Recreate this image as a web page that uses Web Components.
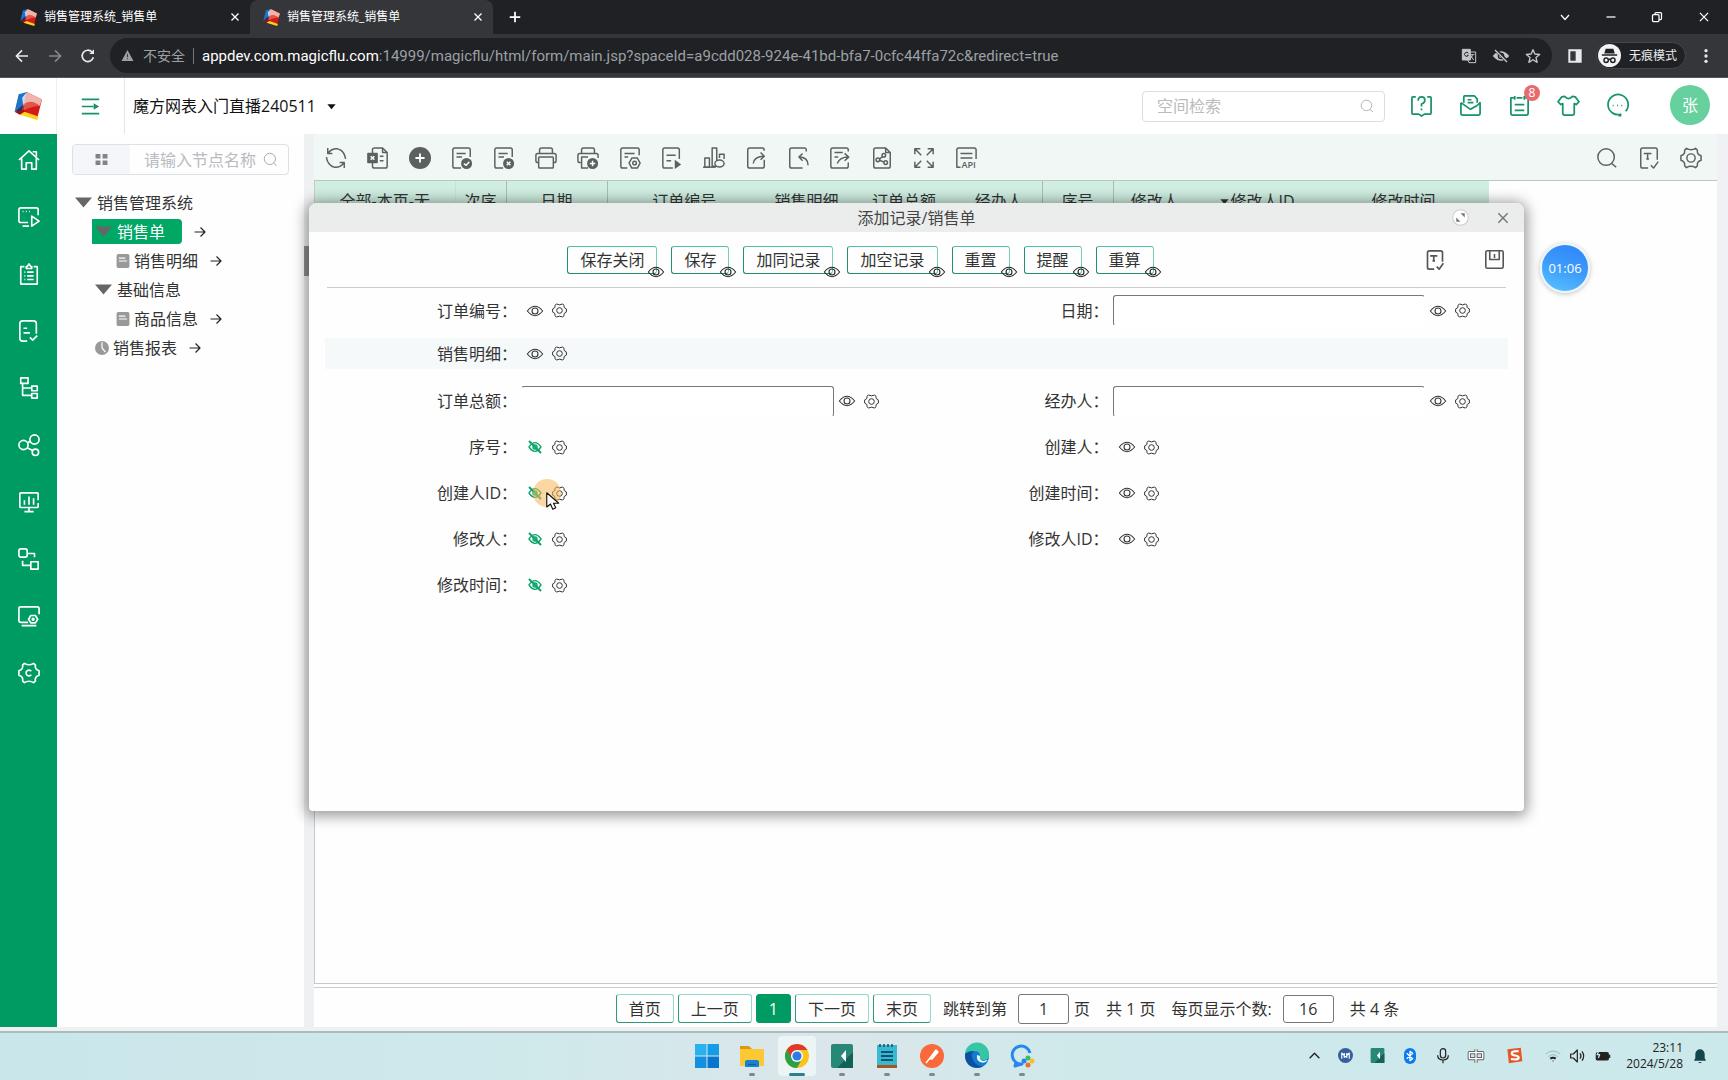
<!DOCTYPE html>
<html lang="zh-CN">
<head>
<meta charset="utf-8">
<title>销售管理系统_销售单</title>
<style>
  html, body { margin: 0; height: 100%; }
  body { font: 16px/24px "Open Sans", "Noto Sans CJK SC", sans-serif; color: #333; overflow: hidden; background: #fdfefd; }
</style>
</head>
<body>
<magic-desktop></magic-desktop>

<script>
const ICONS = {
  logo: `<g stroke="none"><path d="M11 0 24 6.500 20 22 13 20 7 15 8 6Z" fill="#d51b16"/><path d="M11 0 24 6.500 22 12Q14 6 8 12L8 5Z" fill="#f0b4ac"/><path d="M9 10Q15 6 22 12 15 12 8 16Z" fill="#e2574d"/><path d="M4 2 11 0 8 10 0.500 17Z" fill="#1f73c9"/><path d="M7 5 11 0 8 12Z" fill="#cfdff0"/><path d="M0.500 17 8 10 7 16Z" fill="#12387c"/><path d="M0.500 17 8 15 14 20 5 19.500Z" fill="#a3100f"/><path d="M5 19.500 9 17 21 21 20 24Z" fill="#fbd31c"/></g>`,
  close: `<path d="M5 5 19 19M19 5 5 19"/>`,
  plus: `<path d="M12 3V21M3 12H21"/>`,
  chevdown: `<path d="M4 8 12 17 20 8"/>`,
  chevup: `<path d="M3 17 12 8 21 17"/>`,
  min: `<path d="M3 12H21"/>`,
  restore: `<rect x="3" y="7" width="13" height="14" rx="2"/><path d="M8 7V5Q8 3 10 3H19Q21 3 21 5V15Q21 17 19 17H16"/>`,
  back: `<path d="M21 12H4M12 3.500 3.500 12 12 20.500"/>`,
  forward: `<path d="M3 12H20M12 3.500 20.500 12 12 20.500"/>`,
  reload: `<path d="M20 14A8.500 8.500 0 1 1 18 6L20 8"/><path d="M21 2V9H14Z" fill="currentColor" stroke="none"/>`,
  warn: `<path d="M12 2 23 22H1Z" fill="currentColor" stroke="none"/><path d="M12 9V15M12 17V19" stroke="#202124"/>`,
  translate: `<rect x="2" y="2" width="12" height="16" fill="currentColor"/><path d="M14 6H22V22H12L10 18"/><path d="M11 8A3 3 0 1 0 11 11H9" stroke="#202124"/><path d="M14 10H20M17 10Q17 15 13 17M15 12 19 18"/>`,
  eyeoffsolid: `<path d="M1 12Q12 0 23 12Q12 24 1 12Z" fill="currentColor"/><circle cx="12" cy="12" r="4" stroke="#202124" fill="none"/><path d="M3 2 22 21" stroke="#202124" stroke-width="5"/><path d="M3 3 21 21"/>`,
  star: `<path d="M12 2.500 14.800 9 22 9.700 16.500 14.300 18.200 21.500 12 17.600 5.800 21.500 7.500 14.300 2 9.700 9.200 9Z"/>`,
  panel: `<path fill="currentColor" stroke="none" fill-rule="evenodd" d="M2 2H22V22H2ZM5 5V19H13V5Z"/>`,
  incognito: `<circle cx="12" cy="12" r="12" fill="#f1f3f4" stroke="none"/><path d="M8 5H16L17.500 10H6.500Z" fill="#202124" stroke="none"/><path d="M4 11.500H20M10.500 16.500Q12 15.500 13.500 16.500" stroke="#202124"/><circle cx="8.500" cy="17" r="2.300" stroke="#202124"/><circle cx="15.500" cy="17" r="2.300" stroke="#202124"/>`,
  dots: `<g fill="currentColor" stroke="none"><circle cx="12" cy="4" r="2.500"/><circle cx="12" cy="12" r="2.500"/><circle cx="12" cy="20" r="2.500"/></g>`,
  menu: `<path d="M1 3H23M1 12H16M1 21H23"/><path d="M16 8 23 12 16 16Z" fill="currentColor" stroke="none"/>`,
  caret: `<path d="M3 7H21L12 18Z" fill="currentColor" stroke="none"/>`,
  search: `<circle cx="11" cy="11" r="9"/><path d="M17 18 22 22"/>`,
  help: `<path d="M6 3H3Q2 3 2 4V20Q2 21 3 21H9L12 23 15 21H21Q22 21 22 20V4Q22 3 21 3H18"/><path d="M8.500 7Q8.500 3 12 3 15.500 3 15.500 6.500 15.500 9 12 10.500V13M12 15V17"/>`,
  mail: `<path d="M5 9V3Q5 2 6 2H16L19 5V9M2 9V20Q2 22 4 22H20Q22 22 22 20V9L19 12M2 9 12 16 19 12M9 6H13M9 9H15"/>`,
  tasks: `<path d="M6 4H3V20Q3 22 5 22H19Q21 22 21 20V4H18M9 4H15M7 2V6M17 2V6M7 11H17M7 17H17"/>`,
  shirt: `<path d="M8 2.500Q12 7 16 2.500L19 3 23 8 20 11 18 10V20Q18 22 16 22H8Q6 22 6 20V10L4 11 1 8 5 3Z"/>`,
  chat: `<path d="M16 21A10.500 10.500 0 1 1 20.500 18"/><path d="M7 12H8M11.500 12H12.500M16 12H17M13 22.500H16"/>`,
  home: `<path d="M1 12 12 2 23 12M4 10V22H9V15H15V22H20V10M16 3H20V8"/>`,
  screenplay: `<path d="M11 18H3Q1 18 1 16V4Q1 2 3 2H20Q22 2 22 4V10M5 22H12M5 6H6M8.500 6H9.500M12 6H13M15 11V22L23 16.500Z"/>`,
  clipboard: `<path d="M7 4H3V23H21V4H17M9 4H10L12 1 14 4H15V6H9ZM7 10H8M10 10H17M7 14H8M10 14H17M7 18H8M10 18H17"/>`,
  doccheck: `<path d="M10 23H5Q2 23 2 20V4Q2 1 5 1H17Q20 1 20 4V15M6 9H10M6 14H13M13 19 16 22 21 17"/>`,
  orgtree: `<rect x="3" y="1" width="8" height="6"/><path d="M5 7V20H15M5 12H15"/><rect x="15" y="10" width="6" height="5"/><rect x="15" y="18" width="6" height="5"/>`,
  share: `<circle cx="6" cy="12" r="5"/><circle cx="18" cy="6" r="5"/><circle cx="19" cy="20" r="3.500"/><path d="M10.500 9.500 13.500 8M10 15 16 18"/>`,
  monitor: `<path d="M22 10V3Q22 2 21 2H3Q2 2 2 3V17Q2 18 3 18H21Q22 18 22 17V13M7 10V15M12 6V15M17 8V15M12 18V22M7 22.500H17"/>`,
  flow: `<rect x="1" y="1" width="9" height="9" rx="2"/><rect x="14" y="15" width="8" height="8"/><path d="M10 6H18V10M5 14V19H14"/>`,
  screengear: `<path d="M11 19H3Q1 19 1 17V3Q1 2 3 2H21Q23 2 23 4V10M4 22.500H20"/><path d="M14 11.500H19L21.500 15.500 19 19.500H14L11.500 15.500Z"/><circle cx="16.500" cy="15.500" r="1"/>`,
  gearc: `<path d="M7 1.500Q12 4.500 17 1.500L19 3.500Q18 8 23 9.500V14.500Q18 16 19 20.500L17 22.500Q12 19.500 7 22.500L5 20.500Q6 16 1 14.500V9.500Q6 8 5 3.500Z"/><path d="M14.500 10A3.200 3.200 0 1 0 14.500 14"/>`,
  gear: `<path d="M7 1.500Q12 4.500 17 1.500L19 3.500Q18 8 23 9.500V14.500Q18 16 19 20.500L17 22.500Q12 19.500 7 22.500L5 20.500Q6 16 1 14.500V9.500Q6 8 5 3.500Z"/><circle cx="12" cy="12" r="4.500"/>`,
  eye: `<path d="M0.500 12Q12 -2 23.500 12Q12 26 0.500 12Z"/><circle cx="12" cy="12" r="4.500"/>`,
  eyeoff: `<path d="M3 12Q12 -1 21 12Q12 25 3 12Z"/><circle cx="12" cy="12" r="3"/><path d="M3 3 21 21" stroke-width="3"/>`,
  grid: `<path fill="currentColor" stroke="none" d="M1 2H10V10H1ZM14 2H23V10H14ZM1 14H10V22H1ZM14 14H23V22H14Z"/>`,
  tri: `<path d="M0 5H24L12 19Z" fill="currentColor" stroke="none"/>`,
  doc: `<rect x="1" y="0" width="22" height="24" rx="3" fill="currentColor" stroke="none"/><path d="M5 7H16M5 12H19" stroke="#fff"/>`,
  pie: `<circle cx="12" cy="12" r="12" fill="currentColor" stroke="none"/><path d="M12 2V12L18 19" stroke="#fff"/>`,
  arrow: `<path d="M1 12H22M13 3 22 12 13 21"/>`,
  refresh: `<path d="M4 6Q8 1 14 2 21 4 22.500 13M20 18Q16 23 10 22 3 20 1.500 11M3 1V7H8M21 23V17H16"/>`,
  excel: `<path d="M6 7V3Q6 1 8 1H17L22 6V21Q22 23 20 23H8Q6 23 6 21V17M17 1V6H22M14 10H18M14 15H18"/><rect x="1" y="7" width="10" height="10" fill="currentColor"/><path d="M4 10 8 14M8 10 4 14" stroke="#fff"/>`,
  addfill: `<circle cx="12" cy="12" r="12" fill="currentColor" stroke="none"/><path d="M12 7V17M7 12H17" stroke="#fff" stroke-width="2"/>`,
  docok: `<path d="M11 23H4Q2 23 2 21V3Q2 1 4 1H19Q21 1 21 3V11M6 7H16M6 11H12"/><circle cx="17" cy="18" r="6" fill="currentColor" stroke="none"/><path d="M14 18 16.500 20 20 16" stroke="#fff"/>`,
  docx: `<path d="M11 23H4Q2 23 2 21V3Q2 1 4 1H19Q21 1 21 3V11M6 7H16M6 11H12"/><circle cx="17" cy="18" r="6" fill="currentColor" stroke="none"/><path d="M15 16 19 20M19 16 15 20" stroke="#fff"/>`,
  print: `<path d="M5 7V3Q5 1 7 1H17Q19 1 19 3V7M4 17H3Q1 17 1 15V9Q1 7 3 7H21Q23 7 23 9V15Q23 17 21 17H20"/><rect x="4" y="11" width="16" height="12" rx="1"/>`,
  printadd: `<path d="M5 7V3Q5 1 7 1H17Q19 1 19 3V7M4 17H3Q1 17 1 15V9Q1 7 3 7H21Q23 7 23 9V12M12 11H5V23H12"/><circle cx="17" cy="18" r="6" fill="currentColor" stroke="none"/><path d="M17 15V21M14 18H20" stroke="#fff"/>`,
  docgear: `<path d="M9 23H4Q2 23 2 21V3Q2 1 4 1H20Q22 1 22 3V9M6 7H17M6 11H10"/><path d="M14 12H20L23 17.500 20 23H14L11 17.500Z"/><circle cx="17" cy="17.500" r="2"/>`,
  docrun: `<path d="M13 23H4Q2 23 2 21V3Q2 1 4 1H18Q20 1 20 3V13M6 9H16M6 15H11"/><path d="M15 14 22 19 15 24Z" fill="currentColor" stroke="none"/>`,
  chart: `<path d="M0 22H14"/><rect x="2" y="12" width="5" height="10"/><rect x="10" y="1" width="5" height="20"/><path d="M18 12V8H23V13"/><ellipse cx="18" cy="18" rx="5" ry="3.800" fill="#f0f7f4"/>`,
  docout: `<path d="M21 14V21Q21 23 19 23H5Q3 23 3 21V3Q3 1 5 1H19Q21 1 21 4M9 18Q10 10 21 10M17 6 21 10 17 14"/>`,
  docin: `<path d="M21 5V3Q21 1 19 1H5Q3 1 3 3V21Q3 23 5 23H17M23 20Q23 11 13 11M17 7 13 11 17 15"/>`,
  docsend: `<path d="M21 5V3Q21 1 19 1H4Q2 1 2 3V21Q2 23 4 23H19Q21 23 21 21V17M6 6H15M6 11H10M9 18Q12 11 21 11M17 7 21.500 11 17 15"/>`,
  docshare: `<path d="M16 1H5Q3 1 3 3V21Q3 23 5 23H19Q21 23 21 21V6ZM16 1V6H21"/><circle cx="7.500" cy="14" r="2"/><circle cx="14" cy="9" r="2"/><circle cx="16" cy="17" r="2"/><path d="M9 13 13 10.500M9.500 14.500 14 16.500"/>`,
  expand: `<path d="M2 8V2H8M2 2 9 9M16 2H22V8M22 2 15 9M2 16V22H8M2 22 9 15M22 16V22H16M22 22 15 15"/>`,
  api: `<path d="M6 22H2V3Q2 1 4 1H21Q23 1 23 3V13M6 7H19M6 12H19"/><text x="7" y="23" font-size="10" font-weight="600" fill="currentColor" stroke="none">API</text>`,
  textcheck: `<path d="M11 23H5Q3 23 3 21V3Q3 1 5 1H19Q21 1 21 3V14M7 8V7H14V8M10.500 7V13M9 13H12M14 20 17 23 22 16"/>`,
  save: `<rect x="1" y="1" width="22" height="22" rx="2"/><path d="M6 1V12H18V1M12 5V10"/>`,
  popout: `<circle cx="12" cy="12" r="11" fill="#fff" stroke="#ccc"/><path d="M12 6H18V12ZM12 18H6V12Z" fill="#777" stroke="none"/>`,
  win: `<g fill="#0a84dc" stroke="none"><path d="M0 0H11.500V11.500H0Z" fill="#28b3ee"/><path d="M12.500 0H24V11.500H12.500Z" fill="#169be6"/><path d="M0 12.500H11.500V24H0Z" fill="#1390df"/><path d="M12.500 12.500H24V24H12.500Z" fill="#0876ce"/></g>`,
  folder: `<g stroke="none"><path d="M0 2H9L12 5V12H0Z" fill="#d99a13"/><path d="M0 5H24V22H0Z" fill="#fcc934"/><path d="M5 18Q5 16 7 16H17Q19 16 19 18V23H5Z" fill="#1583d1"/><path d="M8 20H16V21H8Z" fill="#0a5ba3"/></g>`,
  chrome: `<g stroke="none"><circle cx="12" cy="12" r="12" fill="#f9c51d"/><path d="M1.600 6A12 12 0 0 1 22.400 6H12L7 15Z" fill="#dc3a2c"/><path d="M1.600 6A12 12 0 0 0 12 24L17 15 7 14Z" fill="#2ba04a"/><circle cx="12" cy="12" r="6" fill="#fff"/><circle cx="12" cy="12" r="4.600" fill="#2d7be8"/></g>`,
  camtasia: `<g stroke="none"><rect x="1" width="22" height="24" rx="2" fill="#278878"/><path d="M23 8V24H7Z" fill="#126257"/><path d="M16 6V18L11 12Z" fill="#fff"/></g>`,
  notepad: `<g stroke="none"><rect x="2" y="1" width="20" height="20" fill="#38b9cf"/><rect x="2" y="21" width="20" height="3" fill="#a7561d"/></g><path d="M6 8H18M6 12H18M6 16H18" stroke="#0c5577" stroke-width="2"/><path d="M5 0V3M9 0V3M13 0V3M17 0V3" stroke="#145070"/>`,
  postman: `<circle cx="12" cy="12" r="12" fill="#f9693a" stroke="none"/><path d="M6 19 10 14 16 9M10 14 12 15 18 8 16 6Z" fill="#fff" stroke="#fff"/>`,
  edge: `<g stroke="none"><circle cx="12" cy="12" r="12" fill="#1479cf"/><path d="M0 10A12 12 0 0 1 24 11Q24 17 17 16 14 15 15 12 15 7 9 7 3 7 0 10Z" fill="#35c6a6"/><path d="M0 10Q3 7 9 7 5 10 8 16 11 22 18 22.500 9 26 3 20 0 16 0 10Z" fill="#0c519f"/><path d="M15 12Q14 16 18 17L23 16Q20 20 15 18 11 16 12 11Z" fill="#e7f7fb"/></g>`,
  wecom: `<path d="M20 9A9 9 0 1 0 12 20L5 22 6 18" stroke="#2587ef" stroke-width="3"/><g stroke="none"><circle cx="18" cy="14" r="2.500" fill="#3cc05d"/><circle cx="22" cy="17" r="2.500" fill="#f8bf2a"/><circle cx="18" cy="21" r="2.500" fill="#ed6c31"/><circle cx="14" cy="17" r="2.500" fill="#2587ef"/></g>`,
  magnet: `<circle cx="12" cy="12" r="12" fill="#355f9f" stroke="none"/><path d="M6 17V8L12 14 18 8V17M10 8V16M14 8V16" stroke="#fff" stroke-width="1.800"/>`,
  bluetooth: `<rect x="3" width="18" height="24" rx="9" fill="#0a7af0" stroke="none"/><path d="M7 8 16 16 12 19V5L16 8 7 16" stroke="#fff" stroke-width="2"/>`,
  mic: `<rect x="8" y="1" width="8" height="14" rx="4"/><path d="M4 11Q4 18 12 18 20 18 20 11M12 18V23"/>`,
  zhong: `<path d="M2 7H22V16H2ZM12 2V22" stroke="#666" stroke-width="5"/><path d="M2 7H22V16H2ZM12 2V22" stroke="#fff" stroke-width="2"/>`,
  sogou: `<path d="M2 3 21 1 23 20 4 23Z" fill="#e5572a" stroke="none"/><path d="M18 6Q8 5 8 9C8 13 18 11 18 15Q17 19 7 17" stroke="#fff" stroke-width="3"/>`,
  wifi: `<path d="M1 9Q12 0 23 9M5 13Q12 7 19 13" stroke="#9bb"/><path d="M8 16Q12 13 16 16M12 19V20" stroke-width="3"/>`,
  volume: `<path d="M1 9H5L11 3V21L5 15H1ZM15 8Q18 12 15 16M18 5Q23 12 18 19"/>`,
  battery: `<rect x="2" y="7" width="18" height="11" rx="2" fill="currentColor"/><path d="M22 10V15"/><path d="M7 2 3 10H7L5 15" stroke="#cfe9eb"/>`,
  bell: `<path d="M3 19 5 15V9A7 7 0 0 1 19 9V15L21 19ZM9 21H15L12 23Z" fill="currentColor" stroke="none"/>`,
  cursor: `<path d="M1 1V20L6 16 9 23 13 21 10 15H17Z" fill="#fff" stroke="#111"/>`
};

/* Shared base: renders a template string into an open shadow root. */
class View extends HTMLElement {
  connectedCallback() {
    if (this.shadowRoot) return;
    this.attachShadow({ mode: 'open' }).innerHTML = `<style>
      *{box-sizing:border-box} button{font:inherit;color:inherit;background:none;border:0;padding:0;margin:0;display:inline-flex;align-items:center;justify-content:center;vertical-align:middle}
      input{font:inherit;color:inherit;margin:0;min-width:0;outline:0}
      a{color:inherit;text-decoration:none}
      ${this.css()}</style>${this.html()}`;
  }
}

customElements.define('mf-icon', class extends View {
  css() {
    const s = this.getAttribute('size') || 22, w = this.getAttribute('weight') || 1.5;
    return `:host{display:inline-block;flex:none;width:${s}px;height:${s}px}
      svg{display:block;width:100%;height:100%;fill:none;stroke:currentColor;stroke-width:${w};stroke-linejoin:round;overflow:visible}`;
  }
  html() { return `<svg viewBox="0 0 24 24" aria-hidden="true">${ICONS[this.getAttribute('name')]}</svg>`; }
});
const icon = (n, s, w) => `<mf-icon name="${n}" size="${s || 22}" weight="${w || 1.5}"></mf-icon>`;
const iconButton = (n, s, w, label) => `<button type="button" aria-label="${label || n}">${icon(n, s, w)}</button>`;

customElements.define('browser-tab', class extends View {
  css() { return `:host{display:flex;align-items:center;gap:7px;width:243px;height:34px;padding:0 9px 0 13px;color:#fff;font-size:12px}
    :host([active]){background:#35363a;border-radius:8px 8px 0 0} span{flex:1}`; }
  html() { return `${icon('logo', 17)}<span><slot></slot></span>${iconButton('close', 12, 2.5, '关闭')}`; }
});

customElements.define('browser-bar', class extends View {
  css() { return `:host{display:block;flex:none;background:#35363a;color:#fff}
    .tabs{display:flex;align-items:center;height:34px;background:#202124;padding-left:7px}
    .new{display:flex;margin-left:15px}.win{margin-left:auto;display:flex;gap:34px;padding-right:17px}
    .bar{display:flex;align-items:center;height:44px;padding:0 14px;border-bottom:1px solid #55565a;color:#e8eaed}
    .nav{display:flex;gap:17px;margin-right:14px}.dim{display:flex;color:#85868a}
    .omni{flex:1;min-width:0;display:flex;align-items:center;height:35px;border-radius:18px;background:#202124;padding:0 11px;font-size:14px;color:#9aa0a6}
    .safe{margin-left:9px}.sep{width:1px;height:16px;background:#777;margin:0 8px}
    .url{flex:1;font-family:Roboto,sans-serif;font-size:15px;color:#9aa0a6;white-space:nowrap;overflow:hidden}.url b{font-weight:400;color:#fff}
    .acts{display:flex;gap:16px;color:#c4c7c9}.panel{display:flex;margin:0 13px 0 15px}
    .inc{display:flex;align-items:center;gap:8px;height:27px;border-radius:14px;background:#202124;border:1px solid #45464a;padding:0 8px 0 1px;font-size:12px;margin-right:12px}`; }
  html() { return `<div class="tabs"><browser-tab>销售管理系统_销售单</browser-tab><browser-tab active>销售管理系统_销售单</browser-tab>
    <span class="new">${iconButton('plus', 14, 3, '新标签页')}</span>
    <div class="win">${iconButton('chevdown', 12, 2.5, '标签')}${iconButton('min', 12, 2.5, '最小化')}${iconButton('restore', 12, 2.5, '还原')}${iconButton('close', 14, 2.2, '关闭')}</div></div>
    <div class="bar"><div class="nav">${iconButton('back', 16, 2.5, '后退')}<span class="dim">${iconButton('forward', 16, 2.5, '前进')}</span>${iconButton('reload', 16, 2.5, '刷新')}</div>
    <div class="omni">${icon('warn', 13)}<span class="safe">不安全</span><span class="sep"></span>
    <span class="url"><b>appdev.com.magicflu.com</b>:14999/magicflu/html/form/main.jsp?spaceId=a9cdd028-924e-41bd-bfa7-0cfc44ffa72c&amp;redirect=true</span>
    <span class="acts">${icon('translate', 16)}${icon('eyeoffsolid', 16, 2)}${icon('star', 16, 2)}</span></div>
    <span class="panel">${iconButton('panel', 16, 2, '侧边栏')}</span><span class="inc">${icon('incognito', 23)}无痕模式</span>${iconButton('dots', 16, 2, '菜单')}</div>`; }
});

customElements.define('app-header', class extends View {
  css() { return `:host{display:flex;flex:none;align-items:center;height:56px;padding-right:18px;background:#fff;color:#16936a}
    .logo,.menu{align-self:stretch;display:flex;align-items:center;justify-content:center;border-right:1px solid #eee;width:57px}.menu{width:68px;border-color:#e6e6e6}
    .space{color:#111;gap:10px;margin-left:8px;font-size:16px}
    label{display:flex;align-items:center;width:243px;height:31px;margin-left:auto;border:1px solid #ddd;border-radius:4px;padding:0 10px 0 12px;color:#aaa}
    input{border:0;background:none;flex:1}input::placeholder{color:#bbb;opacity:1}
    nav{display:flex;gap:26px;margin:0 41px 0 25px}.note{position:relative;display:flex}
    .badge{position:absolute;left:16px;top:-9px;width:16px;height:16px;border-radius:8px;background:#e86a6f;color:#fff;font-size:12px;line-height:16px;text-align:center}
    nav,.me{margin-bottom:2px}.me{width:40px;height:40px;border-radius:20px;background:#66d19e;color:#fff}`; }
  html() { return `<div class="logo">${icon('logo', 28)}</div><div class="menu">${iconButton('menu', 19, 2, '折叠菜单')}</div>
    <button class="space" type="button">魔方网表入门直播240511 ${icon('caret', 11)}</button>
    <label><input type="text" placeholder="空间检索" aria-label="空间检索">${icon('search', 14)}</label>
    <nav>${iconButton('help', 23, 1.8, '帮助')}${iconButton('mail', 23, 1.8, '消息')}<span class="note">${iconButton('tasks', 23, 1.8, '待办')}<span class="badge">8</span></span>${iconButton('shirt', 23, 1.8, '主题')}${iconButton('chat', 23, 1.8, '更多')}</nav>
    <button class="me" type="button">张</button>`; }
});

customElements.define('side-rail', class extends View {
  css() { return `:host{display:flex;flex:none;flex-direction:column;align-items:center;gap:35px;width:57px;padding:15px 0 0 1px;background:#009b62;color:#fff}`; }
  html() { return ['home', 'screenplay', 'clipboard', 'doccheck', 'orgtree', 'share', 'monitor', 'flow', 'screengear', 'gearc'].map(n => iconButton(n, 22, 1.8)).join(''); }
});

customElements.define('tree-node', class extends View {
  css() { return `:host{display:flex;align-items:center;height:29px;color:#333;white-space:nowrap}
    :host([level="1"]){padding-left:20px}:host([level="2"]){padding-left:41px}
    .node{display:flex;align-items:center;gap:5px;height:25px}.node mf-icon{color:#666}
    :host([leaf]) .node{gap:4px}:host([leaf]) .node mf-icon{color:#999}
    :host([selected]){padding-left:17px}:host([selected]) .node{background:#00a765;color:#fff;border-radius:0 4px 4px 0;padding:0 17px 0 3px}
    .go{display:flex;margin-left:12px;color:#222}`; }
  html() { const i = this.getAttribute('icon') || 'tri';
    return `<a href="#" class="node">${icon(i, i === 'tri' ? 17 : 14, 2)}<slot></slot></a>${this.hasAttribute('go') ? `<span class="go">${iconButton('arrow', 12, 2.4, '打开')}</span>` : ''}`; }
});

customElements.define('nav-tree', class extends View {
  css() { return `:host{display:block;flex:none;width:247px;padding:10px 15px;background:#fdfefd}
    label{display:flex;align-items:center;height:31px;border:1px solid #dde0e6;border-radius:4px;color:#aaa;padding-right:10px;margin-bottom:13px}
    .all{width:57px;height:29px;background:#f4f6fa;color:#80838a;border-radius:4px 0 0 4px;margin-right:14px}
    input{border:0;background:none;flex:1;width:0;padding:0}input::placeholder{color:#b8bbc0;opacity:1}
    .list{padding-left:3px}`; }
  html() { return `<label><button class="all" type="button" aria-label="全部">${icon('grid', 13)}</button><input type="text" placeholder="请输入节点名称" aria-label="请输入节点名称">${icon('search', 15)}</label>
    <div class="list"><tree-node>销售管理系统</tree-node><tree-node level="1" selected go>销售单</tree-node><tree-node level="2" icon="doc" leaf go>销售明细</tree-node>
    <tree-node level="1">基础信息</tree-node><tree-node level="2" icon="doc" leaf go>商品信息</tree-node><tree-node level="1" icon="pie" leaf go>销售报表</tree-node></div>`; }
});

customElements.define('page-bar', class extends View {
  css() { return `:host{display:flex;flex:none;align-items:center;justify-content:center;height:40px;margin-top:3px;border-top:1px solid #ccc;background:#fefefe;color:#333;white-space:nowrap;padding:2px 16px 0 0}
    .b{height:29px;padding:0 12px;border:1px solid #2e9a7c;border-right-color:#8fdcc8;border-top-color:#8fdcc8;border-radius:3px;margin-right:4px}
    .on{background:#009b62;color:#fff;border-color:#009b62;padding:0 12px}
    input{width:51px;height:30px;border:1px solid #777;border-radius:3px;text-align:center;background:#fff;padding:0;margin:0 5px 0 11px}
    .t{margin-left:8px}.g{margin-left:16px}.n{height:28px;margin-right:0}`; }
  html() { return `<button class="b">首页</button><button class="b">上一页</button><button class="b on">1</button><button class="b">下一页</button><button class="b">末页</button>
    <label class="t" for="go">跳转到第</label><input id="go" type="text" value="1"><span>页</span><span class="g">共 1 页</span><label class="g" for="size">每页显示个数:</label><input class="n" id="size" type="text" value="16"><span class="g">共 4 条</span>`; }
});

customElements.define('record-grid', class extends View {
  css() { return `:host{display:flex;flex:1;min-width:0;flex-direction:column;background:#fdfefd}
    .tools{display:flex;flex:none;align-items:center;gap:20px;height:47px;padding:1px 15px 0 11px;background:#f0f7f4;color:#5b615f;border-bottom:1px solid #b9c6c1}
    .right{margin-left:auto;display:flex;gap:20px}
    .body{flex:1;border-left:1px solid #c4ccc9;border-bottom:1px solid #c8c8c8}
    table{border-collapse:collapse;table-layout:fixed;width:1174px;background:linear-gradient(#d2efe3,#c3e3d6)}
    th{font-weight:400;color:#333;height:40px;padding:0;white-space:nowrap}.line{border-right:1px solid #a5beb4}.faint{border-right:1px solid #c5e2d6}`; }
  html() {
    const cols = [['全部-本页-无', 140, 'faint'], ['次序', 51, 'line'], ['日期', 101, 'line'], ['订单编号', 154], ['销售明细', 91], ['订单总额', 104], ['经办人', 86, 'line'], ['序号', 71, 'line'], ['修改人', 83], ['<mf-icon name="caret" size="11"></mf-icon>修改人ID', 122], ['修改时间', 171]];
    const tools = ['refresh', 'excel', 'addfill', 'docok', 'docx', 'print', 'printadd', 'docgear', 'docrun', 'chart', 'docout', 'docin', 'docsend', 'docshare', 'expand', 'api'];
    return `<div class="tools">${tools.map(n => iconButton(n, 22, 1.6)).join('')}<span class="right">${['search', 'textcheck', 'gear'].map(n => iconButton(n, 22, 1.6)).join('')}</span></div>
    <div class="body"><table><colgroup>${cols.map(c => `<col style="width:${c[1]}px">`).join('')}</colgroup><thead><tr>${cols.map(c => `<th class="${c[2] || ''}">${c[0]}</th>`).join('')}</tr></thead></table></div>
    <page-bar></page-bar>`;
  }
});

customElements.define('form-field', class extends View {
  css() { return `:host{display:flex;align-items:center;height:46px;min-width:0;color:#333}
    .l{width:192px;text-align:right;white-space:nowrap}
    .ops{display:flex;gap:9px;margin-left:10px}.eye{display:flex}.off{color:#0aa468}
    input{flex:1;height:31px;margin-left:4px;border:1px solid #777;border-radius:3px;border-bottom-color:transparent;background:#fff}
    :host([edge=right]) input{border-left-color:transparent}:host([edge=left]) input{border-right-color:transparent}
    :host([edge]) .ops{margin:0 38px 0 5px}`; }
  html() {
    const box = this.hasAttribute('edge'), off = this.hasAttribute('off');
    return `${box ? `<label class="l" for="v"><slot></slot></label><input id="v" type="text">` : `<span class="l"><slot></slot></span>`}
    <span class="ops"><span class="eye ${off ? 'off' : ''}">${off ? iconButton('eyeoff', 16, 2, '显示') : iconButton('eye', 16, 1.6, '隐藏')}</span>${iconButton('gear', 15, 1.6, '设置')}</span>`;
  }
});

customElements.define('action-button', class extends View {
  css() { return `:host{position:relative;display:block}
    button{height:28px;padding:0 12px;border:1px solid #238f70;border-top-color:#55bfa5;border-right-color:#77cdb8;border-radius:3px;color:#333}
    mf-icon{position:absolute;right:-7px;bottom:-6px;color:#222}`; }
  html() { return `<button type="button"><slot></slot></button>${icon('eye', 16, 1.6)}`; }
});

customElements.define('record-dialog', class extends View {
  css() { return `:host{position:absolute;left:309px;right:204px;top:203px;height:608px;background:#fdfefd;border-radius:8px 8px 4px 4px;box-shadow:0 2px 14px 3px rgba(0,0,0,.4);color:#333}
    header{display:grid;grid-template-columns:1fr auto 1fr;align-items:center;height:29px;background:#ebedec;border-radius:8px 8px 0 0;color:#444;padding:0 13px}
    header .r{display:flex;justify-content:flex-end;align-items:center;gap:26px;color:#777}
    .acts{display:grid;grid-template-columns:1fr auto 1fr;align-items:center;height:56px;margin:0 18px;border-bottom:1px solid #ccc;color:#555}
    .mid{display:flex;gap:14px;margin-right:112px}
    .right{display:flex;justify-content:flex-end;gap:40px;padding-right:2px}
    form{display:grid;grid-template-columns:1fr 1fr;padding:0 16px}
    .first{height:45px}.band{grid-column:1/3;height:31px;margin:5px 0 9px;background:#f6f9fa}`; }
  html() { return `<header><span></span><span>添加记录/销售单</span><span class="r">${iconButton('popout', 17, 1.5, '最大化')}${iconButton('close', 16, 2.2, '关闭')}</span></header>
    <div class="acts"><span></span><div class="mid">${['保存关闭', '保存', '加同记录', '加空记录', '重置', '提醒', '重算'].map(t => `<action-button>${t}</action-button>`).join('')}</div><span class="right">${iconButton('textcheck', 20, 2, '文本')}${iconButton('save', 19, 2, '保存布局')}</span></div>
    <form><form-field class="first">订单编号：</form-field><form-field class="first" edge="left">日期：</form-field>
    <form-field class="band">销售明细：</form-field>
    <form-field edge="right">订单总额：</form-field><form-field edge="left">经办人：</form-field>
    <form-field off>序号：</form-field><form-field>创建人：</form-field>
    <form-field off>创建人ID：</form-field><form-field>创建时间：</form-field>
    <form-field off>修改人：</form-field><form-field>修改人ID：</form-field>
    <form-field off>修改时间：</form-field></form>`; }
});

customElements.define('task-bar', class extends View {
  css() { return `:host{display:grid;grid-template-columns:1fr auto 1fr;align-items:center;flex:none;height:49px;border-top:2px solid #a9bcc0;padding-bottom:2px;background:linear-gradient(90deg,#c9e6ea,#cfe9eb 30%,#dbe6ea 48%,#cfe9eb 62%,#cbe8eb);color:#222;box-sizing:border-box}
    .apps{display:flex;gap:7px}.app{position:relative;width:38px;height:40px;border-radius:4px}
    .open::after{content:"";position:absolute;bottom:0;left:16px;width:6px;height:3px;border-radius:2px;background:#7b8a8e}
    .on{background:#edf4f6}.on::after{left:11px;width:16px;background:#2b7f8e}
    .tray{display:flex;align-items:center;justify-content:flex-end;gap:22px;padding-right:20px}
    .icons{display:flex;align-items:center;gap:17px}
    .sys{display:flex;gap:9px}.end{display:flex;align-items:center;gap:9px;color:#12464d;margin-left:-7px}
    .clock{font-size:12px;line-height:16px;text-align:right;color:#222}`; }
  html() {
    const apps = ['win', 'folder', 'chrome', 'camtasia', 'notepad', 'postman', 'edge', 'wecom'];
    return `<span></span><div class="apps">${apps.map((n, i) => `<button type="button" aria-label="${n}" class="app ${i ? 'open' : ''} ${n === 'chrome' ? 'on' : ''}">${icon(n, 24)}</button>`).join('')}</div>
    <div class="tray"><span class="icons">${icon('chevup', 13, 2.5)}${icon('magnet', 15)}${icon('camtasia', 15)}${icon('bluetooth', 16)}${icon('mic', 16, 1.8)}${icon('zhong', 16)}</span>${icon('sogou', 17)}<span class="sys">${icon('wifi', 16)}${icon('volume', 16, 1.8)}${icon('battery', 16, 1.8)}</span>
    <span class="end"><span class="clock">23:11<br>2024/5/28</span>${icon('bell', 16)}</span></div>`;
  }
});

customElements.define('float-timer', class extends View {
  css() { return `:host{position:absolute;box-sizing:border-box;right:138px;top:243px;width:50px;height:50px;border-radius:25px;border:2px solid #e9f6ff;background:linear-gradient(200deg,#2f83f8,#3b9bfb 50%,#5cc4fd);box-shadow:0 1px 5px rgba(0,0,0,.25);color:#fff;font-size:13px;line-height:46px;text-align:center}`; }
  html() { return `<slot></slot>`; }
});

customElements.define('mouse-pointer', class extends View {
  css() { return `:host{position:absolute;left:533px;top:479px;width:28px;height:28px;border-radius:14px;background:rgba(247,182,89,.55)} mf-icon{position:absolute;left:13px;top:13px}`; }
  html() { return icon('cursor', 18, 1.5); }
});

customElements.define('magic-desktop', class extends View {
  css() { return `:host{position:relative;display:flex;flex-direction:column;height:100vh;overflow:hidden}
    main{display:flex;flex:1;min-height:0;border-bottom:4px solid #eff1f1;background:#fdfefd}
    .split{flex:none;display:flex;width:10px;background:#eef0f2;padding-top:112px}.split i{width:5px;height:30px;background:#8e8e8e}
    .edge{flex:none;width:11px;background:#f0f1f4}`; }
  html() { return `<browser-bar></browser-bar><app-header></app-header>
    <main><side-rail></side-rail><nav-tree></nav-tree><div class="split"><i></i></div><record-grid></record-grid><div class="edge"></div></main>
    <task-bar></task-bar><record-dialog></record-dialog><float-timer>01:06</float-timer><mouse-pointer></mouse-pointer>`; }
});
</script>
</body>
</html>
